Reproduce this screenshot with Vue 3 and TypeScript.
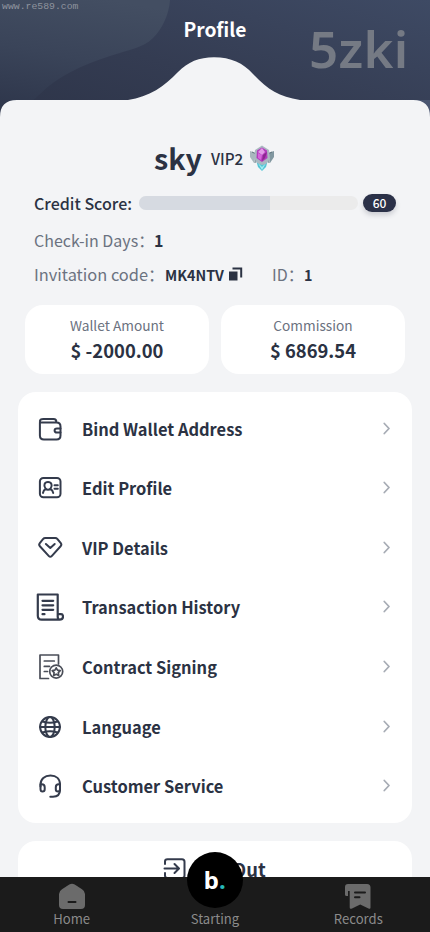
<script setup lang="ts">
interface MenuItem {
  icon: string
  label: string
}

const items: MenuItem[] = [
  { icon: 'wallet', label: 'Bind Wallet Address' },
  { icon: 'card', label: 'Edit Profile' },
  { icon: 'gem', label: 'VIP Details' },
  { icon: 'history', label: 'Transaction History' },
  { icon: 'contract', label: 'Contract Signing' },
  { icon: 'globe', label: 'Language' },
  { icon: 'headset', label: 'Customer Service' },
]

const score = 60
</script>

<template>
  <div class="screen">
    <header class="hero">
      <svg class="hero-art" width="430" height="130" viewBox="0 0 430 130">
        <defs>
          <linearGradient id="heroBase" x1="0" y1="1" x2="1" y2="0">
            <stop offset="0" stop-color="#2c3347" />
            <stop offset="0.45" stop-color="#343c52" />
            <stop offset="1" stop-color="#3e4a64" />
          </linearGradient>
          <linearGradient id="heroWave" x1="0.65" y1="0" x2="0.4" y2="1">
            <stop offset="0" stop-color="#434e62" />
            <stop offset="0.5" stop-color="#3a4459" />
            <stop offset="1" stop-color="#2e364b" />
          </linearGradient>
        </defs>
        <rect width="430" height="130" fill="url(#heroBase)" />
        <rect x="400" y="100" width="30" height="30" fill="#4a5671" />
        <path d="M0 0H170C169 15 162 29 153 38C143 48 128 50 110 56C82 65 58 76 40 94C34 100 20 112 0 120Z" fill="url(#heroWave)" />
        <path d="M0 130V117Q0 100 17 100H128C149 97 165 86 178 72C188 62 199 57.300 214 57.300C231 57.300 243 63 253 74C267 89 279 97 300 100H413Q430 100 430 117V130Z" fill="#f3f4f6" />
      </svg>
      <span class="watermark">www.re589.com</span>
      <h1 class="title">Profile</h1>
      <span class="brand">5zki</span>
    </header>

    <main class="content">
      <div class="user">
        <span class="name">sky</span>
        <span class="level">VIP2</span>
        <svg class="badge" width="26" height="26" viewBox="0 0 26 26">
          <path d="M1 6L7 8L5 18L1 12Z" fill="#a8b7bd" />
          <path d="M25 6L19 8L21 18L25 12Z" fill="#8197a0" />
          <path d="M3 7L7 9L6 18M23 7L19 9L20 18" fill="none" stroke="#60747e" stroke-width="1" />
          <path d="M7 15H19L17 22L13 26L9 22Z" fill="#55c5d5" />
          <path d="M9 18L13 22L17 18L13 25Z" fill="#a4edf2" />
          <path d="M13 .5L20 5L21 14L17 19L13 20L8 18L5 13L6 5Z" fill="#aab7c1" />
          <path d="M13 2.500L18 5.500L18.500 13L13 17L7.500 13L8 5.500Z" fill="#b43bbd" />
          <path d="M13 3L16 7L13 10L9 7Z" fill="#e29ae8" />
          <path d="M9 8L13 10L12 15L9 13Z" fill="#d666db" />
          <path d="M14 10L18 7L16 13L13 16Z" fill="#8b278f" />
        </svg>
      </div>

      <div class="credit">
        <span class="credit-label">Credit Score:</span>
        <div class="track"><div class="fill" :style="{ width: score + '%' }"></div></div>
        <span class="score">{{ score }}</span>
      </div>

      <div class="row days"><span class="muted">Check-in Days：</span><b>1</b></div>
      <div class="row codes">
        <span class="muted">Invitation code：</span><b class="code">MK4NTV</b>
        <svg class="copy" width="14" height="14" viewBox="0 0 14 14"><path d="M0 4.500H8.500V13.500H0Z" fill="#2b3243" /><path d="M3.500 1.500H12.200V10.500" fill="none" stroke="#2b3243" stroke-width="2" /></svg>
        <span class="muted id">ID：</span><b>1</b>
      </div>

      <div class="balances">
        <div class="balance"><span class="balance-label">Wallet Amount</span><strong>$ -2000.00</strong></div>
        <div class="balance"><span class="balance-label">Commission</span><strong>$ 6869.54</strong></div>
      </div>

      <nav class="menu">
        <div v-for="item in items" :key="item.icon" class="menu-item">
          <svg class="menu-icon" width="28" height="28" viewBox="0 0 28 28">
            <g v-if="item.icon === 'wallet'">
              <path d="M3.900 7.500V20.500Q3.900 24.500 7.900 24.500H20.500Q24.500 24.500 24.500 20.500V11.500Q24.500 7.500 20.500 7.500H5.500Q3.900 7.500 3.900 6.300Q3.900 3.900 7.500 3.900H17.500Q20.400 3.900 20.400 7" />
              <path d="M24.500 13.400H21Q18.600 13.400 18.600 15.500Q18.600 17.600 21 17.600H24.500" />
            </g>
            <g v-else-if="item.icon === 'card'">
              <rect x="3.900" y="3.900" width="20.600" height="19.400" rx="3.500" />
              <path d="M9.500 14.500C7.200 11.500 8.500 8.100 12 8.100C15.500 8.100 16.800 11.500 14.600 14.500M9.500 14.500Q10.700 15.800 12 15.800Q13.500 15.800 14.600 14.500M9.600 14.800Q7.300 16.300 7 18.900M14.500 14.800Q16.800 16.300 17.200 18.900M18.500 11.200H21.800M18.500 14.800H21.800" />
            </g>
            <g v-else-if="item.icon === 'gem'">
              <path d="M9.300 4.100H19.200Q20.600 4.100 21.500 5.100L24.800 9.200Q26 10.800 24.600 12.300L15.700 22.100Q14.300 23.600 12.900 22.100L3.900 12.300Q2.500 10.800 3.800 9.200L7 5.100Q7.900 4.100 9.300 4.100ZM9.900 10L14.300 14L18.700 10" />
            </g>
            <g v-else-if="item.icon === 'history'" class="heavy">
              <path d="M1.800 1.500H21.700V24M1.800 1.500V22.700Q1.800 26.600 5.800 26.600H23.700Q27 26.600 27 23.500Q27 21.200 25 21.200H21.700V23.600Q21.700 26.600 23.700 26.600M6.500 7.800H17.200M6.500 12.300H17.200M6.500 16.800H17.200M6.500 21.200H8.500" />
            </g>
            <g v-else-if="item.icon === 'contract'" class="fine">
              <path d="M22.500 11V2H4V25.500H12.500M8.300 8H18.300M8.300 13.400H13.500M8.300 18.500H11.500" />
              <circle cx="20.200" cy="18.600" r="6.500" />
              <path d="M20.200 14.800L21.500 17.200L24.200 17.700L22.300 19.700L22.700 22.400L20.200 21.200L17.700 22.400L18.100 19.700L16.200 17.700L18.900 17.200Z" />
            </g>
            <g v-else-if="item.icon === 'globe'">
              <circle cx="14" cy="14" r="9.900" />
              <ellipse cx="14" cy="14" rx="4.700" ry="9.900" />
              <path d="M4 14H24M6.500 8.500Q14 11 21.500 8.500M6.500 19.500Q14 17 21.500 19.500" />
            </g>
            <g v-else>
              <path d="M4.500 14.500V12.500C4.500 7 8.600 3.500 14.500 3.500S24 7 24 12.500V18Q24 24.700 17 24.700H14.300" />
              <path d="M4.500 12.300H5.800Q8.700 12.300 8.700 15.200V17.200Q8.700 19.500 6.500 19.500Q4.500 19.500 4.500 17ZM24 12.300H22.700Q19.800 12.300 19.800 15.200V17.200Q19.800 19.500 22 19.500Q24 19.500 24 17Z" />
            </g>
          </svg>
          <span class="menu-label">{{ item.label }}</span>
          <svg class="chevron" width="8" height="14" viewBox="0 0 8 14"><path d="M1.300 1.500L6 6.500L1.300 11.500" /></svg>
        </div>
      </nav>

      <div class="logout">
        <svg width="24" height="24" viewBox="0 0 24 24"><path d="M2 7V4.500Q2 2.200 4.500 2.200H19Q21.500 2.200 21.500 4.700V18.500Q21.500 21 19 21H4.500Q2 21 2 18.500V16M1.500 11.500H15.500M11.500 7L16 11.500L11.500 16" /></svg>
        <span>Log Out</span>
      </div>
    </main>

    <footer class="tabs">
      <div class="tab">
        <svg width="28" height="28" viewBox="0 0 28 28"><path d="M11.300 1.600Q14 0 16.700 1.600L24 6.200Q27 8 27 11V22Q27 26 23 26H5Q1 26 1 22V11Q1 8 4 6.200Z" fill="#6b6b6b" /><path d="M10.500 19H17.500" stroke="#1b1b1b" stroke-width="2" stroke-linecap="round" /></svg>
        <span>Home</span>
      </div>
      <div class="tab center">
        <div class="orb"><span>b<i>.</i></span></div>
        <span>Starting</span>
      </div>
      <div class="tab">
        <svg width="28" height="28" viewBox="0 0 28 28"><path d="M4 1H23Q26.500 1 26.500 4.500V24.500Q26.500 26.500 24.500 25.500L16.200 21.500L8 25.500Q5.700 26.500 5.700 24.500V8H4V13H2.600Q1 13 1 11.500V4Q1 1 4 1Z" fill="#6b6b6b" /><path d="M11 9.600H21M11 14.200H15.500" stroke="#1b1b1b" stroke-width="2" stroke-linecap="round" /></svg>
        <span>Records</span>
      </div>
    </footer>
  </div>
</template>

<style>
body {
  margin: 0;
  overflow: hidden;
}
</style>

<style scoped>
.screen {
  position: relative;
  width: 430px;
  height: 932px;
  overflow: hidden;
  background: #f3f4f6;
  color: #2b3243;
  font-family: "Noto Sans CJK SC", sans-serif;
}
.hero {
  position: relative;
  height: 130px;
}
.hero-art {
  display: block;
}
.watermark {
  position: absolute;
  left: 2px;
  top: 1px;
  color: #8f949e;
  font: 9.800px/12px "Liberation Mono", monospace;
}
.title {
  position: absolute;
  inset: 14px 0 auto;
  margin: 0;
  text-align: center;
  color: #fff;
  font-size: 19.200px;
  line-height: 30px;
  font-weight: 700;
}
.brand {
  position: absolute;
  left: 309px;
  top: 17px;
  color: #757a84;
  font: 600 51px/62px "Noto Sans", sans-serif;
  letter-spacing: 0.300px;
}
.content {
  height: 802px;
}
.user {
  display: flex;
  align-items: center;
  height: 56px;
  padding: 0 0 2px 154px;
}
.name {
  width: 57px;
  font-size: 28.700px;
  font-weight: 700;
  line-height: 40px;
}
.level {
  width: 38px;
  font-size: 15.200px;
  font-weight: 500;
  line-height: 20px;
}
.badge {
  margin-bottom: 1px;
}
.credit {
  display: flex;
  align-items: center;
  height: 30px;
  padding-left: 34px;
}
.credit-label {
  width: 105px;
  font-size: 16px;
  font-weight: 500;
  white-space: nowrap;
}
.track {
  width: 219px;
  height: 14px;
  border-radius: 7px;
  background: #ebebeb;
  overflow: hidden;
}
.fill {
  height: 14px;
  background: #d6dae1;
}
.score {
  width: 33px;
  height: 18px;
  margin-left: 5px;
  border-radius: 9px;
  background: #2b3148;
  box-shadow: 0 3px 5px rgba(43, 49, 72, 0.2);
  color: #fff;
  text-align: center;
  font-size: 12px;
  font-weight: 500;
  line-height: 18px;
}
.row {
  display: flex;
  align-items: center;
  height: 34px;
  padding-left: 34px;
  font-size: 16px;
  white-space: nowrap;
}
.days {
  height: 44px;
}
.codes {
  height: 24px;
}
.muted {
  color: #6b7280;
}
.days .muted {
  width: 120px;
}
.codes .muted {
  width: 131px;
  font-size: 16.400px;
}
.codes b {
  font-size: 14.300px;
}
.code {
  width: 64px;
}
.codes .id {
  width: 32px;
  margin-left: 29px;
  font-size: 16px;
}
.balances {
  display: flex;
  gap: 12px;
  padding: 19px 25px 0;
}
.balance {
  display: flex;
  flex: 1;
  flex-direction: column;
  align-items: center;
  height: 69px;
  border-radius: 18px;
  background: #fff;
}
.balance-label {
  margin-top: 9px;
  color: #6b7280;
  font-size: 13.700px;
  line-height: 22px;
}
.balance strong {
  font-size: 18.400px;
  line-height: 28px;
}
.menu {
  box-sizing: border-box;
  height: 431px;
  margin: 18px 18px 0;
  padding: 7px 0;
  border-radius: 18px;
  background: #fff;
}
.menu-item {
  display: flex;
  align-items: center;
  height: 59.570px;
  padding: 0 21px 0 18px;
}
.menu-icon,
.chevron,
.logout svg {
  flex: none;
  fill: none;
  stroke: #343b4c;
  stroke-width: 2;
  stroke-linecap: round;
  stroke-linejoin: round;
}
.heavy {
  stroke-width: 2.200;
}
.fine {
  stroke: #4a4e58;
  stroke-width: 1.700;
}
.menu-label {
  flex: 1;
  margin-left: 18px;
  font-size: 16.450px;
  font-weight: 700;
}
.chevron {
  stroke: #a7acb5;
  stroke-width: 1.800;
}
.logout {
  display: flex;
  align-items: center;
  gap: 8px;
  height: 55px;
  margin: 18px 18px 0;
  padding-left: 145px;
  border-radius: 18px;
  background: #fff;
  font-size: 18.400px;
  font-weight: 700;
}
.tabs {
  position: absolute;
  inset: auto 0 0;
  display: flex;
  height: 55px;
  background: #1b1b1b;
}
.tab {
  display: flex;
  flex: 1;
  flex-direction: column;
  align-items: center;
  padding-top: 6px;
  color: #8b8b8b;
  font-size: 13.100px;
  line-height: 20px;
}
.tab > span {
  margin-top: -2px;
}
.tab svg {
  flex: none;
}
.center {
  position: relative;
}
.center > span {
  margin-top: 26px;
}
.orb {
  position: absolute;
  top: -25px;
  left: 43.500px;
  width: 56px;
  height: 56px;
  border-radius: 50%;
  background: #000;
  color: #fff;
  text-align: center;
  font: 700 24px/56px "Noto Sans", sans-serif;
}
.orb i {
  color: #27b9b9;
  font-style: normal;
}
</style>
